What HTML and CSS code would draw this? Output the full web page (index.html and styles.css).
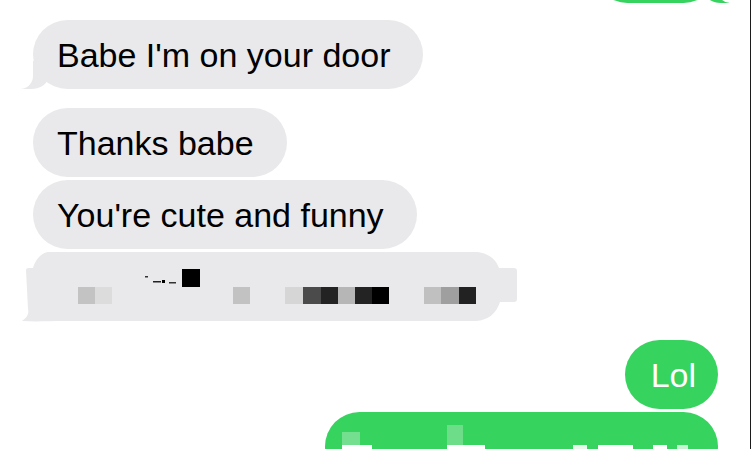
FILE: index.html
```html
<!DOCTYPE html>
<html lang="en">
<head>
<meta charset="utf-8">
<title>Messages</title>
<link rel="stylesheet" href="styles.css">
</head>
<body>
<div class="screen">
  <div class="row sent">
    <div class="bubble out tail top-cut" aria-hidden="true"></div>
  </div>
  <div class="row recv gap-17">
    <div class="bubble in tail">Babe I'm on your door</div>
  </div>
  <div class="row recv gap-19">
    <div class="bubble in">Thanks babe</div>
  </div>
  <div class="row recv gap-3">
    <div class="bubble in">You're cute and funny</div>
  </div>
  <div class="row recv gap-3">
    <svg class="censored" width="500" height="71" viewBox="20 252 500 71" aria-label="censored message">
      <path fill="#e9e9eb" d="M48 252 L478 252 C490 254 496 260 499 268 L514 268 Q517 268 517 271 L517 299 Q517 302 514 302 L500 302 C496 314 488 320 476 321 L62 321 C50 321 36 322 22 321 C28 317 29 313 28 309 L26 270 Q26 268 29 268 L33 268 C36 258 42 253 48 252 Z"/>
      <rect x="78" y="287" width="17" height="17" fill="#c3c3c3"/>
      <rect x="95" y="287" width="17" height="17" fill="#dcdcdc"/>
      <rect x="145" y="276" width="3" height="1.5" fill="#333"/>
      <rect x="153" y="281" width="8" height="1.5" fill="#222"/>
      <rect x="162" y="280" width="3" height="3" fill="#000"/>
      <rect x="169" y="282" width="7" height="1.5" fill="#333"/>
      <rect x="182" y="269" width="18" height="18" fill="#000"/>
      <rect x="233" y="287" width="17" height="17" fill="#c2c2c2"/>
      <rect x="285" y="287" width="18" height="17" fill="#d6d6d6"/>
      <rect x="303" y="287" width="18" height="17" fill="#4b4b4b"/>
      <rect x="321" y="287" width="17" height="17" fill="#232323"/>
      <rect x="338" y="287" width="17" height="17" fill="#b6b6b6"/>
      <rect x="355" y="287" width="17" height="17" fill="#232323"/>
      <rect x="372" y="287" width="17" height="17" fill="#000"/>
      <rect x="424" y="287" width="17" height="17" fill="#c0c0c0"/>
      <rect x="441" y="287" width="18" height="17" fill="#9f9f9f"/>
      <rect x="459" y="287" width="17" height="17" fill="#222"/>
    </svg>
  </div>
  <div class="row sent gap-17">
    <div class="bubble out">Lol</div>
  </div>
  <div class="row sent gap-3">
    <div class="bubble out wide">
      <svg class="green-pixels" width="393" height="69" viewBox="325 412 393 69" aria-label="censored message">
        <rect x="342" y="432" width="18" height="13" fill="#74e08f"/>
        <rect x="447" y="425" width="16" height="20" fill="#6edd8a"/>
        <rect x="342" y="445" width="30" height="12" fill="#fff"/>
        <rect x="447" y="445" width="38" height="12" fill="#fff"/>
        <rect x="573" y="445" width="14" height="12" fill="#e9f9ed"/>
        <rect x="598" y="445" width="35" height="12" fill="#fff"/>
        <rect x="653" y="445" width="14" height="12" fill="#fff"/>
        <rect x="677" y="445" width="11" height="12" fill="#c8f2d3"/>
      </svg>
    </div>
  </div>
</div>
</body>
</html>
```

FILE: styles.css
```css
* {
  box-sizing: border-box;
}

html, body {
  margin: 0;
  padding: 0;
  background: #ffffff;
}

.screen {
  width: 751px;
  height: 449px;
  overflow: hidden;
  border-right: 1px solid #1c1c1c;
  padding: 0 32px 0 33px;
  display: flex;
  flex-direction: column;
  font-family: "Liberation Sans", Arial, sans-serif;
  font-size: 34px;
}

.row {
  display: flex;
  flex-shrink: 0;
}

.row.recv {
  justify-content: flex-start;
}

.row.sent {
  justify-content: flex-end;
}

.gap-3 { margin-top: 3px; }
.gap-17 { margin-top: 17px; }
.gap-19 { margin-top: 19px; }

.bubble {
  position: relative;
  height: 69px;
  line-height: 70px;
  border-radius: 35px;
  white-space: nowrap;
}

.bubble.in {
  background: #e9e9eb;
  color: #000000;
  padding: 0 33px 0 24px;
}

.bubble.out {
  background: #36d35f;
  color: #ffffff;
  padding: 0 22px 0 26px;
}

.bubble.top-cut {
  width: 125px;
  margin-top: -66px;
}

.bubble.wide {
  width: 393px;
  padding: 0;
  overflow: hidden;
}

.green-pixels {
  display: block;
}

.censored {
  display: block;
  margin-left: -13px;
}

/* incoming tail (bottom-left) */
.bubble.in.tail::before {
  content: "";
  position: absolute;
  left: -12px;
  bottom: 0;
  width: 28px;
  height: 28px;
  background: #e9e9eb;
  border-bottom-right-radius: 18px 14px;
}

.bubble.in.tail::after {
  content: "";
  position: absolute;
  left: -20px;
  bottom: 0;
  width: 20px;
  height: 30px;
  background: #ffffff;
  border-bottom-right-radius: 13px;
}

/* outgoing tail (bottom-right) */
.bubble.out.tail::before {
  content: "";
  position: absolute;
  right: -11px;
  bottom: 0;
  width: 26px;
  height: 26px;
  background: #36d35f;
  border-bottom-left-radius: 18px 14px;
}

.bubble.out.tail::after {
  content: "";
  position: absolute;
  right: -18px;
  bottom: 0;
  width: 18px;
  height: 28px;
  background: #ffffff;
  border-bottom-left-radius: 12px;
}
```
